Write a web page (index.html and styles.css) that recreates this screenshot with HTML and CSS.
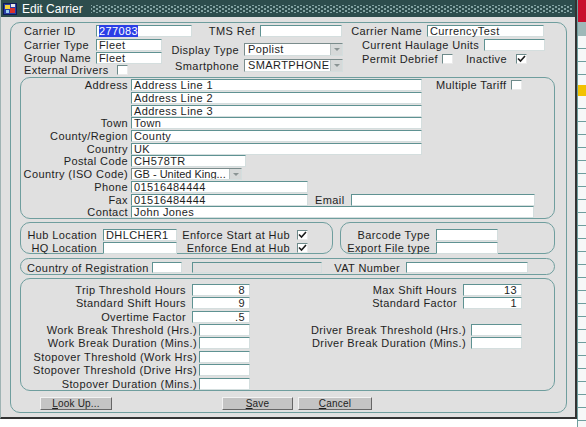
FILE: index.html
```html
<!DOCTYPE html>
<html lang="en">
<head>
  <meta charset="UTF-8">
  <title>Edit Carrier</title>
  <link rel="stylesheet" href="styles.css">
</head>
<body>
  <div class="screen">
    <div class="window">
      <div class="titlebar">
        <svg class="app-icon" width="14" height="13" viewBox="0 0 14 13">
          <rect x="0.5" y="1.5" width="13" height="11" fill="#2a3fa8" stroke="#0d1a55"/>
          <rect x="2" y="3" width="5" height="4" fill="#f2d23a"/>
          <rect x="7" y="6" width="5" height="5" fill="#d8302c"/>
          <rect x="3" y="8" width="3" height="3" fill="#9ad0f0"/>
          <rect x="8" y="2" width="4" height="3" fill="#e8e8e8"/>
        </svg>
        <span class="title">Edit Carrier</span>
        <span class="dots"></span>
      </div>

      <div class="frame">
        <!-- header fields -->
        <div class="row head1">
          <span class="lbl w72">Carrier ID</span>
          <span class="fld w96"><span class="hl">277083</span></span>
          <span class="lbl r w68">TMS Ref</span>
          <span class="fld w82"></span>
          <span class="lbl r w85">Carrier Name</span>
          <span class="fld w117">CurrencyTest</span>
        </div>
        <div class="head2">
          <div class="col-left">
            <div class="row h13 mt1">
              <span class="lbl w72">Carrier Type</span>
              <span class="fld w66">Fleet</span>
            </div>
            <div class="row h13">
              <span class="lbl w72">Group Name</span>
              <span class="fld w66">Fleet</span>
            </div>
            <div class="row h12">
              <span class="lbl w93">External Drivers</span>
              <span class="chk"></span>
            </div>
          </div>
          <div class="col-mid">
            <div class="row h13 mt6">
              <span class="lbl r w82">Display Type</span>
              <span class="sel w99"><span class="sel-text">Poplist</span><span class="arrow"></span></span>
            </div>
            <div class="row h13 mt3">
              <span class="lbl r w82">Smartphone</span>
              <span class="sel w99"><span class="sel-text">SMARTPHONE</span><span class="arrow"></span></span>
            </div>
          </div>
          <div class="col-right">
            <div class="row h13 mt1">
              <span class="lbl w141 pl19">Current Haulage Units</span>
              <span class="fld w61"></span>
            </div>
            <div class="row h13 mt1 pl19">
              <span class="lbl">Permit Debrief</span>
              <span class="chk ml4"></span>
              <span class="lbl ml13">Inactive</span>
              <span class="chk ml9 on"><svg viewBox="0 0 9 8"><polyline points="1,3.5 3.5,6 8,1" fill="none" stroke="#1c1c1c" stroke-width="1.6"/></svg></span>
            </div>
          </div>
        </div>

        <!-- address -->
        <div class="sec address">
          <div class="arow">
            <span class="lbl r alb">Address</span>
            <span class="fld w291">Address Line 1</span>
            <span class="lbl ml14">Multiple Tariff</span>
            <span class="chk ml5"></span>
          </div>
          <div class="arow"><span class="lbl r alb"></span><span class="fld w291">Address Line 2</span></div>
          <div class="arow"><span class="lbl r alb"></span><span class="fld w291">Address Line 3</span></div>
          <div class="arow"><span class="lbl r alb">Town</span><span class="fld w291">Town</span></div>
          <div class="arow"><span class="lbl r alb">County/Region</span><span class="fld w291">County</span></div>
          <div class="arow"><span class="lbl r alb">Country</span><span class="fld w291">UK</span></div>
          <div class="arow"><span class="lbl r alb">Postal Code</span><span class="fld w115">CH578TR</span></div>
          <div class="arow">
            <span class="lbl r alb">Country (ISO Code)</span>
            <span class="sel w111"><span class="sel-text tight">GB - United King...</span><span class="arrow"></span></span>
          </div>
          <div class="arow"><span class="lbl r alb">Phone</span><span class="fld w177">01516484444</span></div>
          <div class="arow">
            <span class="lbl r alb">Fax</span>
            <span class="fld w177">01516484444</span>
            <span class="lbl ml7">Email</span>
            <span class="fld w184 ml6"></span>
          </div>
          <div class="arow"><span class="lbl r alb">Contact</span><span class="fld w403">John Jones</span></div>
        </div>

        <!-- hub / barcode -->
        <div class="hubrow">
          <div class="sec hub">
            <div class="row h13">
              <span class="lbl r w82 pr6">Hub Location</span>
              <span class="fld w74">DHLCHER1</span>
              <span class="lbl r w117 pr4">Enforce Start at Hub</span>
              <span class="chk ml3 on"><svg viewBox="0 0 9 8"><polyline points="1,3.5 3.5,6 8,1" fill="none" stroke="#1c1c1c" stroke-width="1.6"/></svg></span>
            </div>
            <div class="row h13">
              <span class="lbl r w82 pr6">HQ Location</span>
              <span class="fld w74"></span>
              <span class="lbl r w117 pr4">Enforce End at Hub</span>
              <span class="chk ml3 on"><svg viewBox="0 0 9 8"><polyline points="1,3.5 3.5,6 8,1" fill="none" stroke="#1c1c1c" stroke-width="1.6"/></svg></span>
            </div>
          </div>
          <div class="sec barcode">
            <div class="row h13">
              <span class="lbl r w95 pr6">Barcode Type</span>
              <span class="fld w62"></span>
            </div>
            <div class="row h13">
              <span class="lbl r w95 pr6">Export File type</span>
              <span class="fld w62"></span>
            </div>
          </div>
        </div>

        <!-- registration -->
        <div class="sec reg">
          <div class="row h11">
            <span class="lbl w131 pl6">Country of Registration</span>
            <span class="fld w30 f11"></span>
            <span class="fld dis w130 f11 ml10"></span>
            <span class="lbl r w84 pr6">VAT Number</span>
            <span class="fld w122 f11"></span>
          </div>
        </div>

        <!-- hours -->
        <div class="sec hours">
          <div class="hcol">
            <div class="hrow"><span class="lbl r w171 pr6">Trip Threshold Hours</span><span class="fld num w58">8</span></div>
            <div class="hrow"><span class="lbl r w171 pr6">Standard Shift Hours</span><span class="fld num w58">9</span></div>
            <div class="hrow"><span class="lbl r w171 pr6">Overtime Factor</span><span class="fld num w58">.5</span></div>
            <div class="hrow"><span class="lbl r w178 pr2">Work Break Threshold (Hrs.)</span><span class="fld w51"></span></div>
            <div class="hrow"><span class="lbl r w178 pr2">Work Break Duration (Mins.)</span><span class="fld w51"></span></div>
            <div class="hrow"><span class="lbl r w178 pr2">Stopover Threshold (Work Hrs)</span><span class="fld w51"></span></div>
            <div class="hrow"><span class="lbl r w178 pr2">Stopover Threshold (Drive Hrs)</span><span class="fld w51"></span></div>
            <div class="hrow"><span class="lbl r w178 pr2">Stopover Duration (Mins.)</span><span class="fld w51"></span></div>
          </div>
          <div class="hcol right">
            <div class="hrow"><span class="lbl pr6">Max Shift Hours</span><span class="fld num w59">13</span></div>
            <div class="hrow"><span class="lbl pr6">Standard Factor</span><span class="fld num w59">1</span></div>
            <div class="hrow"></div>
            <div class="hrow"><span class="lbl pr5">Driver Break Threshold (Hrs.)</span><span class="fld w51"></span></div>
            <div class="hrow"><span class="lbl pr5">Driver Break Duration (Mins.)</span><span class="fld w51"></span></div>
          </div>
        </div>

        <div class="buttons">
          <span class="btn lookup"><u>L</u>ook Up...</span>
          <span class="btn save"><u>S</u>ave</span>
          <span class="btn cancel"><u>C</u>ancel</span>
        </div>
      </div>
    </div>

    <div class="side">
      <div class="side-red"></div>
      <div class="side-grey"></div>
      <div class="side-lines short"></div>
      <div class="side-yellow"></div>
      <div class="side-lines"></div>
    </div>
  </div>
</body>
</html>
```

FILE: styles.css
```css
* {
  box-sizing: border-box;
}

body {
  margin: 0;
  background: #fff;
  font-family: "Liberation Sans", Arial, sans-serif;
  font-size: 11px;
  letter-spacing: 0.4px;
  color: #1e1e1e;
}

.screen {
  display: flex;
  width: 586px;
  height: 427px;
  overflow: hidden;
}

.window {
  width: 577px;
  height: 419px;
  flex-shrink: 0;
  background: #e0e0e0;
  border-left: 1px solid #9fb3b3;
  border-right: 2px solid #333;
  border-bottom: 2px solid #333;
}

.titlebar {
  display: flex;
  align-items: center;
  height: 17px;
  padding-left: 2px;
  background: #2d4d4d;
  color: #fff;
  font-size: 12px;
  letter-spacing: 0;
}

.app-icon {
  flex-shrink: 0;
}

.title {
  margin-left: 5px;
  white-space: nowrap;
}

.dots {
  flex: 1;
  height: 8px;
  margin: 0 3px 0 8px;
  background-image:
    radial-gradient(circle, #85a5a5 0.7px, transparent 1.1px),
    radial-gradient(circle, #85a5a5 0.7px, transparent 1.1px);
  background-size: 6px 4px;
  background-position: 0 0, 3px 2px;
}

.frame {
  width: 557px;
  height: 391px;
  margin: 5px 0 0 9px;
  border: 1px solid #6f9e9e;
  border-radius: 10px;
}

/* generic pieces */
.row {
  display: flex;
  align-items: center;
}

.lbl {
  flex-shrink: 0;
  white-space: nowrap;
}

.r {
  text-align: right;
}

.fld {
  display: block;
  flex-shrink: 0;
  height: 12px;
  padding: 0 2px;
  background: #fff;
  border: 1px solid;
  border-color: #5f9292 #d4dede #d4dede #5f9292;
  line-height: 10px;
  white-space: nowrap;
}

.fld.num {
  text-align: right;
  padding-right: 4px;
}

.fld.dis {
  background: #e0e0e0;
}

.f11 {
  height: 11px;
  line-height: 9px;
}

.hl {
  background: #2b3fe6;
  color: #fff;
}

.sel {
  display: flex;
  flex-shrink: 0;
  height: 13px;
  background: #fff;
  border: 1px solid;
  border-color: #7a8c8c #d4dede #d4dede #7a8c8c;
}

.arow .sel {
  height: 12px;
}

.sel-text {
  flex: 1;
  padding-left: 3px;
  line-height: 10px;
  white-space: nowrap;
  overflow: hidden;
}

.sel-text.tight {
  padding-left: 2px;
  letter-spacing: 0;
}

.arrow {
  position: relative;
  flex-shrink: 0;
  width: 12px;
  background: #d6d9d9;
  border-left: 1px solid #b8c2c2;
}

.arrow::after {
  content: "";
  position: absolute;
  left: 3px;
  top: 4px;
  border-left: 3px solid transparent;
  border-right: 3px solid transparent;
  border-top: 3px solid #8a9494;
}

.chk {
  display: block;
  flex-shrink: 0;
  width: 11px;
  height: 10px;
  background: #fff;
  border: 1px solid;
  border-color: #6d8a8a #eaeaea #eaeaea #6d8a8a;
}

.chk svg {
  display: block;
  width: 9px;
  height: 8px;
}

/* widths and spacing */
.w30 { width: 30px; }
.w51 { width: 51px; }
.w58 { width: 58px; }
.w59 { width: 59px; }
.w61 { width: 61px; }
.w62 { width: 62px; }
.w66 { width: 66px; }
.w68 { width: 68px; padding-right: 5px; }
.w72 { width: 72px; }
.w74 { width: 74px; }
.w82 { width: 82px; padding-right: 5px; }
.w84 { width: 84px; }
.w85 { width: 85px; padding-right: 5px; }
.w93 { width: 93px; }
.w95 { width: 95px; }
.w96 { width: 96px; }
.w99 { width: 99px; }
.w111 { width: 111px; }
.w115 { width: 115px; }
.w117 { width: 117px; }
.w122 { width: 122px; }
.w130 { width: 130px; }
.w131 { width: 131px; }
.w141 { width: 141px; }
.w171 { width: 171px; }
.w177 { width: 177px; }
.w178 { width: 178px; }
.w184 { width: 184px; }
.w291 { width: 291px; }
.w403 { width: 403px; }

.h11 { height: 11px; }
.h12 { height: 12px; }
.h13 { height: 13px; }

.mt1 { margin-top: 1px; }
.mt3 { margin-top: 3px; }
.mt6 { margin-top: 6px; }

.ml3 { margin-left: 3px; }
.ml4 { margin-left: 4px; }
.ml5 { margin-left: 5px; }
.ml6 { margin-left: 6px; }
.ml7 { margin-left: 7px; }
.ml9 { margin-left: 9px; }
.ml10 { margin-left: 10px; }
.ml13 { margin-left: 13px; }
.ml14 { margin-left: 14px; }

.pl6 { padding-left: 6px; }
.pl19 { padding-left: 19px; }
.pr2 { padding-right: 2px; }
.pr4 { padding-right: 4px; }
.pr5 { padding-right: 5px; }
.pr6 { padding-right: 6px; }

/* header */
.head1 {
  height: 13px;
  margin-top: 1px;
  padding-left: 13px;
}

.head2 {
  display: flex;
  height: 40px;
  padding-left: 13px;
}

.col-left {
  width: 138px;
}

.col-mid {
  width: 181px;
}

/* sections */
.sec {
  border: 1px solid #6f9e9e;
  border-radius: 10px;
}

.address {
  width: 535px;
  height: 142px;
  margin-left: 9px;
  padding-top: 1px;
}

.arow {
  display: flex;
  align-items: center;
  height: 12.7px;
}

.alb {
  width: 110px;
  padding-right: 3px;
}

.hubrow {
  display: flex;
  gap: 7px;
  height: 32px;
  margin: 3px 0 0 9px;
}

.hub {
  width: 313px;
  padding-top: 5px;
}

.barcode {
  width: 215px;
  padding-top: 5px;
}

.reg {
  width: 535px;
  height: 17px;
  margin: 4px 0 0 9px;
  padding-top: 3px;
}

.hours {
  display: flex;
  justify-content: space-between;
  width: 535px;
  height: 113px;
  margin: 3px 0 0 9px;
  padding: 4px 32px 0 0;
}

.hrow {
  display: flex;
  align-items: center;
  height: 13.43px;
}

.hcol.right .hrow {
  justify-content: flex-end;
}

/* buttons */
.buttons {
  display: flex;
  margin-top: 6px;
  padding-left: 29px;
}

.btn {
  display: block;
  height: 13px;
  background: #c4c4c4;
  border: 1px solid;
  border-color: #f2f2f2 #666 #666 #f2f2f2;
  font-size: 10px;
  letter-spacing: 0.2px;
  line-height: 11px;
  text-align: center;
}

.lookup { width: 72px; }
.save { width: 71px; margin-left: 110px; }
.cancel { width: 74px; margin-left: 5px; }

/* application behind the dialog */
.side {
  display: flex;
  flex-direction: column;
  width: 9px;
  height: 427px;
  background: #f6f8f8;
  border-left: 1px solid #6f9e9e;
}

.side-red {
  height: 22px;
  background: #c8102e;
}

.side-grey {
  height: 14px;
  background: #9fb8b8;
}

.side-lines {
  flex: 1;
  background: repeating-linear-gradient(to bottom, transparent 0 12px, #6f9e9e 12px 13px);
}

.side-lines.short {
  flex: none;
  height: 49px;
}

.side-yellow {
  height: 11px;
  background: #f2c200;
}
```
